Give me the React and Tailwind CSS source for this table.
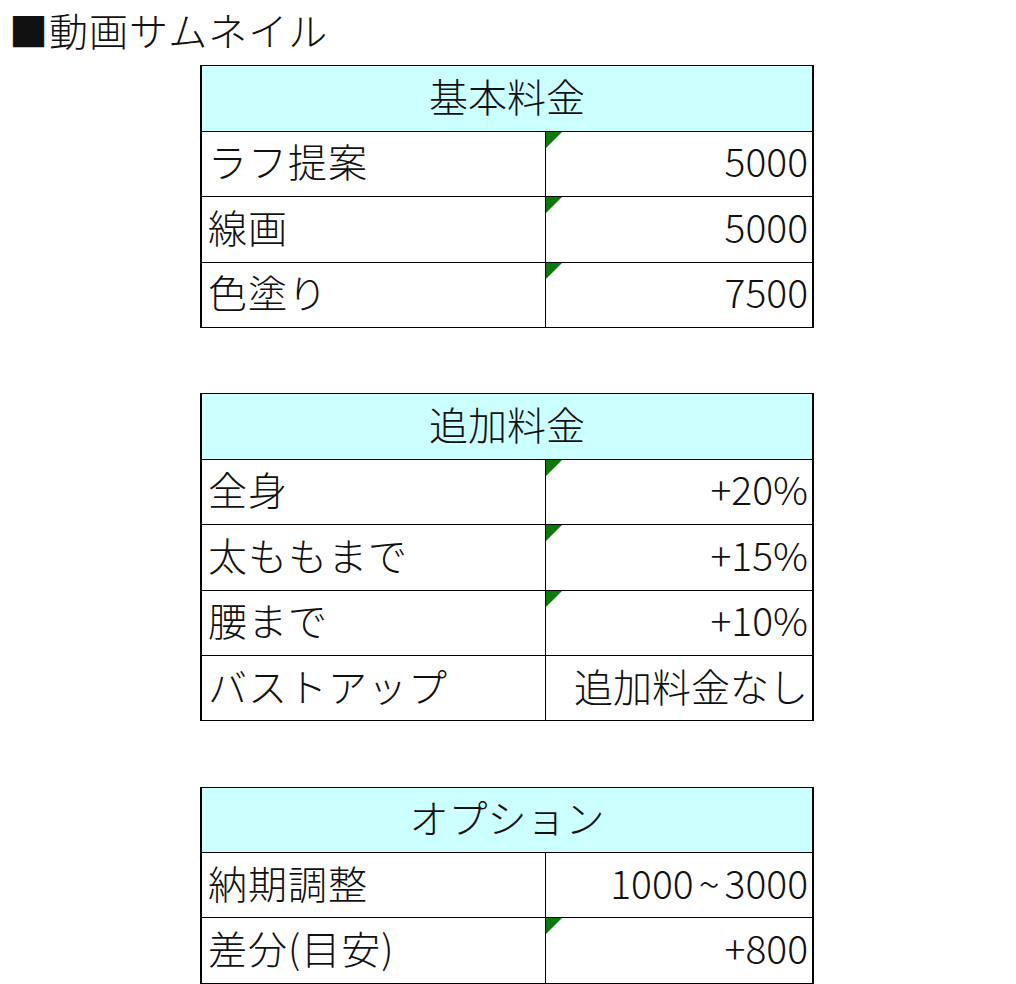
const tables = [
  {
    title: '基本料金',
    rows: [
      ['ラフ提案', '5000', true],
      ['線画', '5000', true],
      ['色塗り', '7500', true],
    ],
  },
  {
    title: '追加料金',
    rows: [
      ['全身', '+20%', true],
      ['太ももまで', '+15%', true],
      ['腰まで', '+10%', true],
      ['バストアップ', '追加料金なし', false],
    ],
  },
  {
    title: 'オプション',
    rows: [
      ['納期調整', <>1000<span className="mx-[5px]">~</span>3000</>, false],
      ['差分(目安)', '+800', true],
    ],
  },
];

function Flag() {
  // green error-check triangle in the corner of the cell
  return (
    <svg className="absolute left-0 top-0" width="16" height="16" viewBox="0 0 16 16">
      <polygon points="0,0 16,0 0,16" fill="#0b7a0b" />
    </svg>
  );
}

function PriceTable({ title, rows }) {
  return (
    <div className="ml-[200px] w-[614px] border-x-2 border-t border-black">
      <div className="h-[65.4px] flex items-center justify-center pb-[6px] bg-[#ccffff] border-b border-black">
        {title}
      </div>
      {rows.map(([label, value, flag]) => (
        <div key={label} className="h-[65.4px] grid grid-cols-[344px_1fr] border-b border-black">
          <div className="flex items-center pl-[6px] pb-[6px] tracking-[1px] border-r border-black">{label}</div>
          <div className="relative flex items-center justify-end pr-[4px] pb-[6px]">
            {flag && <Flag />}
            <span>{value}</span>
          </div>
        </div>
      ))}
    </div>
  );
}

export default function App() {
  return (
    <div
      className="bg-white w-[1016px] min-h-[984px] text-[39px] leading-none font-light text-[#111]"
      style={{ fontFamily: '"Noto Sans CJK JP", "Noto Sans", sans-serif' }}
    >
      <div className="h-[65.4px] flex items-center pl-[9px] pb-[6px] tracking-[1px]">■動画サムネイル</div>
      <div className="flex flex-col gap-[65.4px]">
        {tables.map((t) => (
          <PriceTable key={t.title} title={t.title} rows={t.rows} />
        ))}
      </div>
    </div>
  );
}
